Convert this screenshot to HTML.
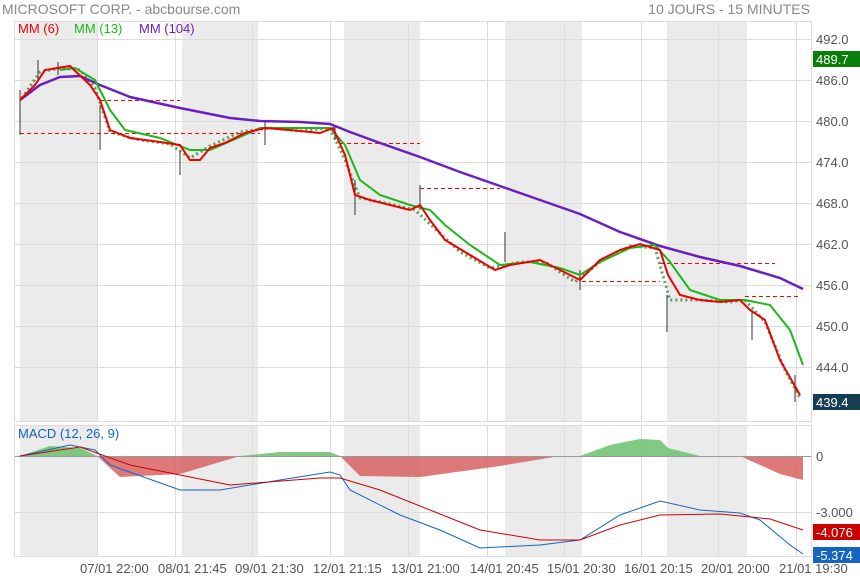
<!DOCTYPE html><html><head><meta charset="utf-8"><style>
body{margin:0;width:860px;height:580px;background:#fff;overflow:hidden;font-family:"Liberation Sans",sans-serif}
svg text{font-family:"Liberation Sans",sans-serif}
</style></head><body>
<svg width="860" height="580" xmlns="http://www.w3.org/2000/svg">
<text x="2" y="14" font-size="14" fill="#888">MICROSOFT CORP. - abcbourse.com</text>
<text x="810" y="14" font-size="14" fill="#888" text-anchor="end">10 JOURS - 15 MINUTES</text>
<g fill="#ebebeb">
<rect x="20" y="21" width="77" height="400"/><rect x="182" y="21" width="76" height="400"/><rect x="344" y="21" width="76" height="400"/><rect x="505" y="21" width="77" height="400"/><rect x="667" y="21" width="80" height="400"/>
<rect x="20" y="425" width="77" height="132"/><rect x="182" y="425" width="76" height="132"/><rect x="344" y="425" width="76" height="132"/><rect x="505" y="425" width="77" height="132"/><rect x="667" y="425" width="80" height="132"/>
</g>
<g stroke="#dcdcdc" stroke-width="1" fill="none">
<rect x="14.5" y="21.5" width="797" height="400"/><rect x="14.5" y="425.5" width="797" height="131"/>
<path d="M15 39.5H811M15 80.5H811M15 121.5H811M15 162.5H811M15 203.5H811M15 244.5H811M15 285.5H811M15 326.5H811M15 367.5H811M15 512.5H811"/>
<path d="M97.5 21V421M175.5 21V421M252.5 21V421M330.5 21V421M408.5 21V421M487.5 21V421M564.5 21V421M641.5 21V421M718.5 21V421M796.5 21V421M97.5 425V557M175.5 425V557M252.5 425V557M330.5 425V557M408.5 425V557M487.5 425V557M564.5 425V557M641.5 425V557M718.5 425V557M796.5 425V557"/>
</g>
<g stroke="#f00" stroke-width="1" stroke-dasharray="4,3" fill="none">
<path d="M100 100.5H180M20 133.5H260M340 143.5H420M420 188.5H500M582 281.5H660M660 263.5H775M745 296.5H800"/>
</g>
<g stroke="#333" stroke-width="1">
<path d="M20 90V135M38 60V80M58 62V75M100 105V150M180 150V175M265 120V145M335 125V140M355 180V215M420 185V210M505 232V262M580 270V290M667 295V332M752 310V340M795 375V402"/>
</g>
<g stroke="#1a7a1a" stroke-width="3" stroke-dasharray="2,3" fill="none" opacity=".7">
<polyline points="22,98 40,72 60,68 80,70 95,88 110,132 140,140 170,144 190,158 210,146 240,132 270,128 300,131 330,128 345,160 360,198 390,204 415,210 430,224 460,252 490,268 520,262 545,262 575,282 600,262 630,246 655,248 670,300 700,300 730,302 745,300 765,322 785,370 800,398"/>
</g>
<polyline fill="none" stroke="#6a1fbf" stroke-width="2.5" points="20,100 40,85 60,77 80,76 100,85 130,97 180,108 230,118 260,121 300,122 330,124 350,132 380,143 420,157 460,172 500,186 540,200 580,214 620,232 660,246 700,257 740,266 780,278 803,289"/>
<polyline fill="none" stroke="#1bb81b" stroke-width="2" points="60,70 75,68 95,80 110,110 125,130 160,138 190,150 210,150 240,137 260,128 300,128 330,128 345,145 360,180 380,195 410,205 430,210 445,225 470,245 500,265 530,262 560,268 580,275 600,262 630,248 655,245 670,262 690,290 720,300 745,300 770,305 790,330 803,365"/>
<polyline fill="none" stroke="#e00" stroke-width="2" points="20,100 35,85 45,70 70,66 90,85 100,100 110,130 130,138 160,142 180,145 190,160 200,160 210,148 225,143 245,133 265,128 290,130 320,133 333,128 345,155 355,195 370,200 390,205 410,210 420,205 430,220 445,240 470,255 495,270 510,265 540,260 560,270 580,280 600,260 620,250 640,244 660,250 668,275 680,295 700,300 720,302 740,300 750,310 765,320 780,360 800,395"/>
<g font-size="13">
<text x="18" y="33" fill="#e00">MM (6)</text><text x="74" y="33" fill="#1bb81b">MM (13)</text><text x="139" y="33" fill="#6a1fbf">MM (104)</text>
</g>
<g font-size="13" fill="#555">
<text x="816" y="44">492.0</text><text x="816" y="85">486.0</text><text x="816" y="126">480.0</text><text x="816" y="167">474.0</text><text x="816" y="208">468.0</text><text x="816" y="249">462.0</text><text x="816" y="290">456.0</text><text x="816" y="331">450.0</text><text x="816" y="372">444.0</text>
<text x="816" y="461">0</text><text x="816" y="517">-3.000</text>
</g>
<rect x="813" y="51" width="47" height="16" fill="#0a7d0a"/><text x="816" y="64" font-size="13" fill="#fff">489.7</text>
<rect x="813" y="394" width="47" height="16" fill="#173d52"/><text x="816" y="407" font-size="13" fill="#fff">439.4</text>
<rect x="813" y="524" width="47" height="16" fill="#c00"/><text x="816" y="537" font-size="13" fill="#fff">-4.076</text>
<rect x="813" y="547" width="47" height="16" fill="#1565c0"/><text x="816" y="560" font-size="13" fill="#fff">-5.374</text>
<path fill="#6cbf6c" opacity=".85" d="M20 456 L50 446 L80 448 L97 456 Z M240 456 L280 452 L330 452 L340 456 Z M580 456 L610 445 L640 439 L660 440 L668 448 L700 456 Z"/>
<path fill="#d86262" opacity=".85" d="M97 456 L120 477 L180 474 L240 456 Z M340 456 L360 476 L420 477 L500 466 L560 456 Z M740 456 L760 465 L780 474 L803 480 L803 456 Z"/>
<path stroke="#999" d="M15 456.5H811"/>
<polyline fill="none" stroke="#1565c0" stroke-width="1" points="20,456 70,445 95,450 110,465 180,490 220,490 280,480 330,472 340,475 350,490 400,515 440,530 480,548 540,545 580,540 620,515 660,501 700,510 740,513 760,520 790,545 803,554"/>
<polyline fill="none" stroke="#c00" stroke-width="1" points="20,456 80,447 130,465 230,485 320,478 340,478 380,490 430,510 480,530 540,540 580,540 620,525 660,515 720,514 770,519 803,530"/>
<text x="18" y="438" font-size="13" fill="#1565c0">MACD (12, 26, 9)</text>
<g font-size="13" fill="#555">
<text x="80" y="573">07/01 22:00</text><text x="158" y="573">08/01 21:45</text><text x="235" y="573">09/01 21:30</text><text x="313" y="573">12/01 21:15</text><text x="391" y="573">13/01 21:00</text><text x="470" y="573">14/01 20:45</text><text x="547" y="573">15/01 20:30</text><text x="624" y="573">16/01 20:15</text><text x="701" y="573">20/01 20:00</text><text x="779" y="573">21/01 19:30</text>
</g>
</svg></body></html>
